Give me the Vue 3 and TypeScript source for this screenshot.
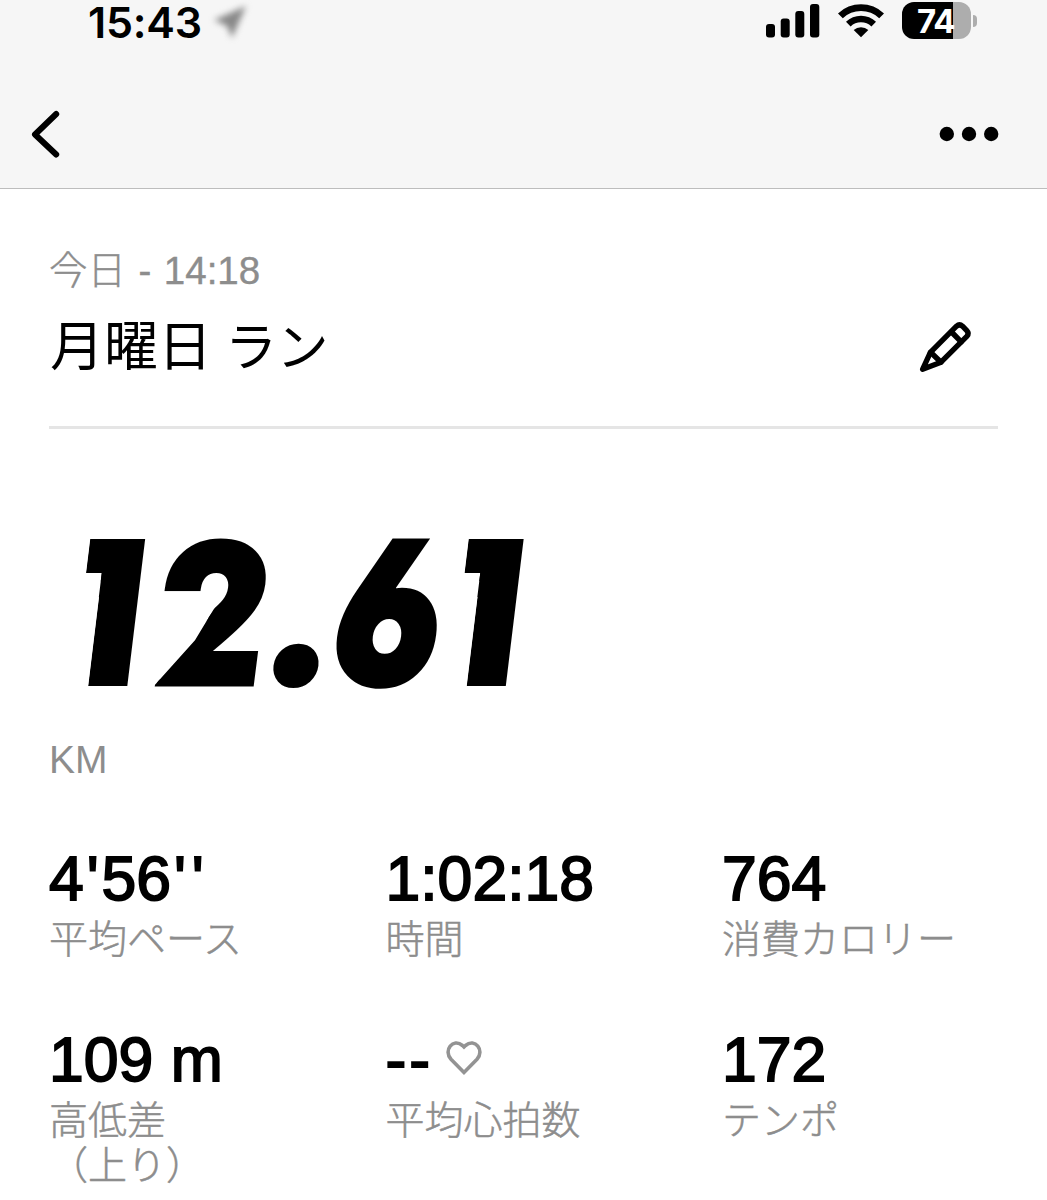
<script setup lang="ts">
interface Stat {
  value: string
  label: string
  kind?: 'pace' | 'heart'
}

interface Glyph {
  char: string
  transform: string
  weight: number
  clip?: string
}

const stats: Stat[] = [
  { value: "4'56''", label: '平均ペース', kind: 'pace' },
  { value: '1:02:18', label: '時間' },
  { value: '764', label: '消費カロリー' },
  { value: '109 m', label: '高低差\n（上り）' },
  { value: '--', label: '平均心拍数', kind: 'heart' },
  { value: '172', label: 'テンポ' },
]

const distance: Glyph[] = [
  { char: '1', transform: 'matrix(0.56 0 -0.123 1.01 26.8 155.5)', weight: 30, clip: 'url(#trim-one)' },
  { char: '2', transform: 'matrix(0.84 0 -0.122 0.96 100 165.5)', weight: 5, clip: 'url(#trim-two)' },
  { char: '.', transform: 'matrix(1.03 0 -0.122 1.03 206 166)', weight: 3 },
  { char: '6', transform: 'matrix(0.81 0 -0.122 0.97 279 166)', weight: 6 },
  { char: '1', transform: 'matrix(0.56 0 -0.123 1.01 405.3 155.5)', weight: 30, clip: 'url(#trim-one)' },
]
</script>

<template>
  <main class="screen">
    <header class="top">
      <div class="status">
        <div class="clock">
          <span class="time">15:43</span>
          <svg class="location" width="44" height="44" viewBox="0 0 44 44">
            <path d="M5 20 37 6 23 38 18 26Z" />
          </svg>
        </div>
        <div class="indicators">
          <svg width="54" height="36" viewBox="0 0 54 36">
            <rect x="0" y="22" width="9" height="13.5" rx="3" />
            <rect x="14.7" y="16.5" width="9" height="19" rx="3" />
            <rect x="29.3" y="9" width="9" height="26.5" rx="3" />
            <rect x="44" y="2" width="9.3" height="33.5" rx="3" />
          </svg>
          <svg class="wifi" width="48" height="36" viewBox="0 0 48 36">
            <path d="M1 11.5A33 33 0 0 1 47 11.5L42.2 16.3A26.2 26.2 0 0 0 5.8 16.3Z" />
            <path d="M9 19.8A21.5 21.5 0 0 1 39 19.8L34.4 24.5A15 15 0 0 0 13.6 24.5Z" />
            <path d="M16.7 28.1A10.5 10.5 0 0 1 31.3 28.1L24 35.3Z" />
          </svg>
          <div class="battery"><span>74</span></div>
          <i class="cap"></i>
        </div>
      </div>
      <nav class="nav">
        <svg width="34" height="52" viewBox="0 0 34 52">
          <path d="M26.2 6 5 26.5 26.2 46.5" fill="none" stroke="#000" stroke-width="6" stroke-linecap="round" stroke-linejoin="round" />
        </svg>
        <svg width="60" height="16" viewBox="0 0 60 16">
          <circle cx="7.8" cy="8" r="7.2" />
          <circle cx="30" cy="8" r="7.2" />
          <circle cx="52.2" cy="8" r="7.2" />
        </svg>
      </nav>
    </header>

    <section class="heading">
      <div>
        <p class="date">今日 - 14:18</p>
        <h1>月曜日 <span>ラン</span></h1>
      </div>
      <svg class="pencil" width="54" height="54" viewBox="0 0 54 54" fill="none" stroke="#000" stroke-width="5.4" stroke-linejoin="round" stroke-linecap="round">
        <path d="M4.6 49.3 12.4 32.3 38.5 6.2Q41.5 3.4 44.5 6.2L48.8 10.6Q51.5 13.5 48.8 16.4L23 42.2Z" />
        <path d="M33.5 12 43.2 21.8M12.6 32.3 23 42.2" />
      </svg>
    </section>

    <section class="distance">
      <svg width="520" height="190" viewBox="0 0 520 190" role="img" aria-label="12.61">
        <defs>
          <clipPath id="trim-one">
            <path d="M-3.5-133.2H200V12.4H24.5V-99.5H-3.5Z" />
          </clipPath>
          <clipPath id="trim-two">
            <path d="M5.3 20V3.6L48.2-45 76-96H-40V-300H300V20Z" />
          </clipPath>
        </defs>
        <text v-for="(g, i) in distance" :key="i" :transform="g.transform" :stroke-width="g.weight" :clip-path="g.clip">{{ g.char }}</text>
      </svg>
      <p>KM</p>
    </section>

    <section class="stats">
      <div v-for="s in stats" :key="s.label" class="stat">
        <div class="value" :class="s.kind">
          <span v-for="(c, i) in s.kind === 'pace' ? s.value.split('') : [s.value]" :key="i" :class="{ prime: c === `'` }">{{ c }}</span>
          <svg v-if="s.kind === 'heart'" width="38" height="36" viewBox="0 0 36 36">
            <path d="M18 32.5 5 19.2C-3 10.5 7-2.5 16.5 5.5L18 7 19.5 5.5C29-2.5 39 10.5 31 19.2Z" fill="none" stroke="#939393" stroke-width="3.6" />
          </svg>
        </div>
        <div class="label">{{ s.label }}</div>
      </div>
    </section>
  </main>
</template>

<style>
body {
  margin: 0;
  background: #fff;
}
</style>

<style scoped>
.screen {
  width: 1047px;
  height: 1200px;
  background: #fff;
  color: #000;
  font-family: 'Liberation Sans', 'Noto Sans CJK JP', sans-serif;
}
.screen svg {
  display: block;
  overflow: visible;
}
p,
h1 {
  margin: 0;
  font-weight: 400;
}
.top {
  box-sizing: border-box;
  height: 189px;
  background: #f6f6f6;
  border-bottom: 1px solid #bdbdbd;
}
.status {
  height: 44px;
  display: flex;
  justify-content: space-between;
  padding: 0 70px 0 88px;
}
.clock {
  display: flex;
}
.time {
  font: 600 43px/44px Inter, sans-serif;
  width: 121px;
  letter-spacing: -0.2px;
}
.location {
  filter: blur(3px);
  fill: #888;
}
.indicators {
  display: flex;
  align-items: flex-start;
  padding-top: 2px;
}
.wifi {
  margin-left: 17px;
}
.battery {
  box-sizing: border-box;
  width: 69px;
  height: 37px;
  margin-left: 17px;
  padding-left: 15px;
  border-radius: 12px;
  background: linear-gradient(90deg, #000 51px, #adadad 51px);
  color: #fff;
  font: 700 33px/39px Inter, sans-serif;
  letter-spacing: -1px;
}
.cap {
  width: 4px;
  height: 12px;
  margin: 13px 0 0 2px;
  border-radius: 0 5px 5px 0;
  background: #adadad;
}
.nav {
  display: flex;
  justify-content: space-between;
  align-items: center;
  height: 52px;
  margin-top: 64px;
  padding: 0 48px 0 30px;
}
.heading {
  display: flex;
  justify-content: space-between;
  box-sizing: border-box;
  height: 240px;
  margin: 0 49px;
  border-bottom: 3px solid #e5e5e5;
}
.date {
  margin-top: 55px;
  font-size: 38.5px;
  font-weight: 300;
  line-height: 54px;
  word-spacing: 1.8px;
  color: #8d8d8d;
  -webkit-text-stroke: 0.4px #8d8d8d;
}
h1 {
  margin-top: 9px;
  padding-left: 1px;
  font-size: 54px;
  line-height: 80px;
}
h1 span {
  font-size: 52px;
  letter-spacing: -0.5px;
  margin-left: -2px;
}
.pencil {
  margin: 131px 26px 0 0;
}
.distance {
  margin: 89px 0 0 49px;
}
.distance text {
  font: 900 202px Inter, sans-serif;
  font-feature-settings: 'cv01', 'cv03', 'ss08';
  stroke: #000;
}
.distance p {
  margin-top: 30px;
  font-size: 39px;
  line-height: 44px;
  color: #8d8d8d;
}
.stats {
  display: grid;
  grid-template-columns: 336.5px 336.5px 325px;
  grid-template-rows: 180.5px 170px;
  margin: 62px 0 0 49px;
}
.value {
  display: flex;
  height: 73px;
  font-size: 62.5px;
  line-height: 69px;
  -webkit-text-stroke: 1.8px #000;
}
.value .prime {
  width: 17.8px;
  text-align: center;
}
.value.heart {
  letter-spacing: 3px;
}
.value svg {
  margin: 15px 0 0 12px;
}
.label {
  font-size: 39px;
  font-weight: 300;
  line-height: 45px;
  white-space: pre-line;
  color: #8d8d8d;
  -webkit-text-stroke: 0.5px #8d8d8d;
}
</style>
